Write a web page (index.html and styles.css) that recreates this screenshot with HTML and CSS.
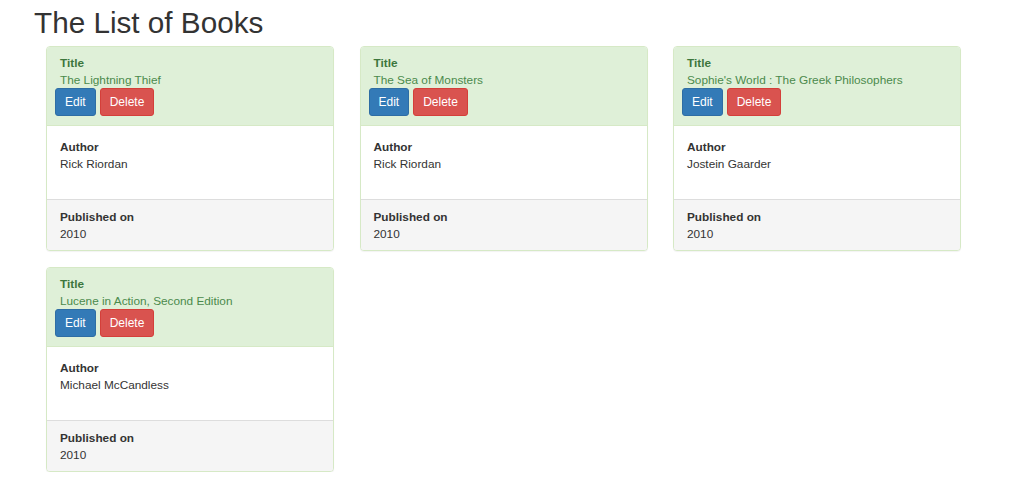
FILE: index.html
```html
<!DOCTYPE html>
<html>
<head>
<meta charset="utf-8">
<link rel="stylesheet" href="styles.css">
</head>
<body>
<h1 class="page-title">The List of Books</h1>
<div class="book-grid">
  <div class="book-card">
    <div class="card-heading">
      <div class="label">Title</div>
      <div class="value">The Lightning Thief</div>
      <div class="actions"><button class="btn btn-edit">Edit</button><button class="btn btn-delete">Delete</button></div>
    </div>
    <div class="card-body">
      <div class="label">Author</div>
      <div class="value">Rick Riordan</div>
    </div>
    <div class="card-footer">
      <div class="label">Published on</div>
      <div class="value">2010</div>
    </div>
  </div>
  <div class="book-card">
    <div class="card-heading">
      <div class="label">Title</div>
      <div class="value">The Sea of Monsters</div>
      <div class="actions"><button class="btn btn-edit">Edit</button><button class="btn btn-delete">Delete</button></div>
    </div>
    <div class="card-body">
      <div class="label">Author</div>
      <div class="value">Rick Riordan</div>
    </div>
    <div class="card-footer">
      <div class="label">Published on</div>
      <div class="value">2010</div>
    </div>
  </div>
  <div class="book-card">
    <div class="card-heading">
      <div class="label">Title</div>
      <div class="value">Sophie's World : The Greek Philosophers</div>
      <div class="actions"><button class="btn btn-edit">Edit</button><button class="btn btn-delete">Delete</button></div>
    </div>
    <div class="card-body">
      <div class="label">Author</div>
      <div class="value">Jostein Gaarder</div>
    </div>
    <div class="card-footer">
      <div class="label">Published on</div>
      <div class="value">2010</div>
    </div>
  </div>
  <div class="book-card">
    <div class="card-heading">
      <div class="label">Title</div>
      <div class="value">Lucene in Action, Second Edition</div>
      <div class="actions"><button class="btn btn-edit">Edit</button><button class="btn btn-delete">Delete</button></div>
    </div>
    <div class="card-body">
      <div class="label">Author</div>
      <div class="value">Michael McCandless</div>
    </div>
    <div class="card-footer">
      <div class="label">Published on</div>
      <div class="value">2010</div>
    </div>
  </div>
</div>
</body>
</html>
```
FILE: styles.css
```css
* { box-sizing: border-box; }
body {
  margin: 0;
  font-family: "Liberation Sans", Arial, sans-serif;
  color: #333;
  background: #fff;
}
.page-title {
  margin: 6px 0 7px 34px;
  font-size: 29.7px;
  font-weight: 400;
  line-height: 33px;
  color: #333;
}
.book-grid {
  display: grid;
  grid-template-columns: repeat(3, 288px);
  column-gap: 25.5px;
  row-gap: 16px;
  padding-left: 46px;
  align-items: start;
}
.book-card {
  border: 1px solid #d6e9c6;
  border-radius: 4px;
  background: #fff;
  box-shadow: 0 1px 1px rgba(0,0,0,0.05);
  overflow: hidden;
  font-size: 11.8px;
  line-height: 17px;
}
.label { font-weight: 700; }
.card-heading {
  background: #dff0d8;
  color: #3c763d;
  padding: 8px 13px 9px 13px;
}
.card-heading .label { color: #3c763d; }
.card-heading .value { color: #4b8a4c; }
.actions {
  display: flex;
  gap: 4px;
  margin-left: -5px;
  margin-top: -1px;
}
.btn {
  font-family: inherit;
  font-size: 12px;
  line-height: 16px;
  padding: 5px 9px;
  border: 1px solid transparent;
  border-radius: 3px;
  color: #fff;
  cursor: pointer;
}
.btn-edit { background: #337ab7; border-color: #2e6da4; }
.btn-delete { background: #d9534f; border-color: #d43f3a; }
.card-body {
  border-top: 1px solid #d6e9c6;
  padding: 13px 13px 26px;
  color: #333;
}
.card-footer {
  background: #f5f5f5;
  border-top: 1px solid #ddd;
  padding: 9px 13px 7px;
  color: #333;
}
```
